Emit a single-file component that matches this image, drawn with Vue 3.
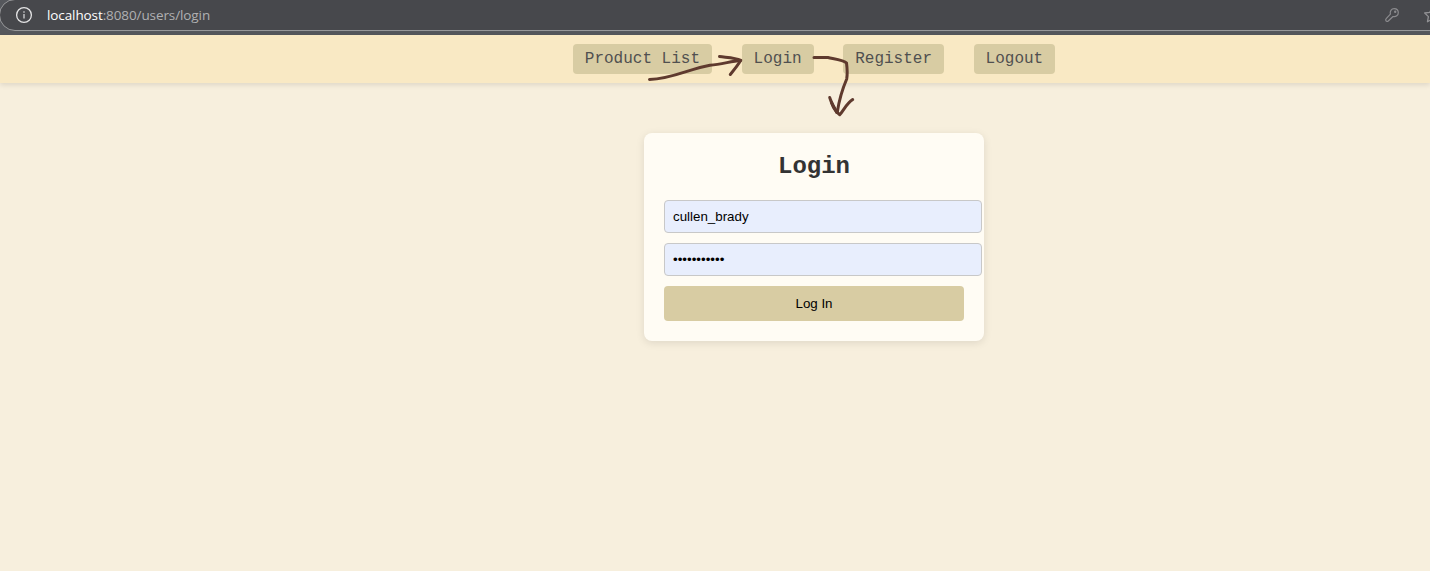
<script setup>
import { ref } from 'vue'

const links = ['Product List', 'Login', 'Register', 'Logout']
const username = ref('cullen_brady')
const password = ref('abcdefghijk')
</script>

<template>
  <div class="window">
    <div class="browser-bar">
      <div class="address">
        <svg class="info" width="18" height="18" viewBox="0 0 18 18" fill="none">
          <circle cx="9" cy="9" r="7.4" stroke="#e4e4e5" stroke-width="1.3" />
          <path d="M9 8v4.6" stroke="#b9b9bb" stroke-width="1.6" />
          <path d="M9 5.2v1.5" stroke="#b9b9bb" stroke-width="1.6" />
        </svg>
        <span class="url"><b>localhost</b><span class="path">:8080/users/login</span></span>
        <svg class="key" width="16" height="16" viewBox="0 0 16 16" fill="none" stroke="#8b8b8e" stroke-width="1.2" stroke-linejoin="round">
          <path d="M6.4 7.2C5.600 4.200 7.400 1.700 10.100 1.700C12.600 1.700 14.300 3.400 14.300 5.800C14.300 8.400 12 10.100 9 9.500L4.300 14C3.500 14.600 2.500 14.500 2 13.800C1.500 13.100 1.600 12.300 2.200 11.600Z" />
          <circle cx="11.200" cy="4.800" r=".6" />
        </svg>
        <svg class="star" width="18" height="18" viewBox="0 0 18 18" fill="none" stroke="#929295" stroke-width="1.300" stroke-linejoin="round">
          <path d="M9 1.700L11.200 6.300L16.300 7L12.600 10.600L13.500 15.700L9 13.300L4.500 15.700L5.400 10.600L1.700 7L6.800 6.300Z" />
        </svg>
      </div>
    </div>

    <nav class="nav">
      <a v-for="link in links" :key="link" class="nav-link">{{ link }}</a>
    </nav>

    <main class="content">
      <form class="card" @submit.prevent>
        <h2>Login</h2>
        <input v-model="username" type="text" aria-label="Username" />
        <input v-model="password" type="password" aria-label="Password" />
        <button type="submit">Log In</button>
      </form>
    </main>

    <svg class="arrows" width="230" height="80" viewBox="640 45 230 80" fill="none" stroke="#5f3a2e" stroke-width="3" stroke-linecap="round" stroke-linejoin="round">
      <path d="M649.500 79.500C672 79 690 68.500 710 65.200C722 64.500 731 61 740.500 60.500" />
      <path d="M719.500 56.500C727 57.500 735 57.500 740.800 60.300C738 65 734 70 730.300 74.500" />
      <path d="M814 57.500H828C835 59 844 60 846.500 63C847.300 69 847.500 74 846.700 79C842 90 839 101 837.300 112" />
      <path d="M829.700 97.500C832.500 105 834 111 839.700 114.700C844 110 846 104 852.700 99.500" />
      <path d="M831.500 102.500L836.800 112.500" />
    </svg>
  </div>
</template>

<style>
html,
body {
  margin: 0;
  overflow: hidden;
}
</style>

<style scoped>
.window {
  position: relative;
  height: 571px;
  overflow: hidden;
  background: #f7efdd;
  font-family: "Courier New", "Liberation Mono", monospace;
}

.browser-bar {
  height: 35px;
  background: #55575c;
  overflow: hidden;
}

.address {
  box-sizing: border-box;
  display: flex;
  align-items: center;
  width: 1470px;
  height: 32px;
  margin: -1px 0 0 -1px;
  padding-left: 15px;
  border: 1px solid #97989a;
  border-radius: 16px;
  background: #47484c;
}

.info {
  flex: none;
}

.url {
  margin-left: 14px;
  color: #fff;
  font: 13.500px/18px "Open Sans", "Noto Sans", sans-serif;
  letter-spacing: -0.100px;
}

.url b {
  font-weight: 400;
}

.path {
  color: #b0b0b2;
}

.key {
  margin-left: 1174px;
}

.star {
  margin-left: 23px;
}

.nav {
  position: relative;
  box-sizing: border-box;
  display: flex;
  justify-content: center;
  align-items: center;
  gap: 29.6px;
  height: 48px;
  padding-left: 198px;
  background: #f9e9c4;
  box-shadow: 0 2px 5px rgba(0, 0, 0, 0.1);
}

.nav-link {
  padding: 0 12px;
  border-radius: 4px;
  background: #d8cca3;
  color: #505050;
  font-size: 16px;
  line-height: 30px;
}

.content {
  display: flex;
  justify-content: center;
  padding: 50px 0 0 198px;
}

.card {
  display: flex;
  flex-direction: column;
  gap: 10px;
  box-sizing: border-box;
  width: 340px;
  height: 208px;
  padding: 20px;
  border-radius: 8px;
  background: #fffcf4;
  box-shadow: 0 2px 8px rgba(0, 0, 0, 0.1);
}

h2 {
  margin: 0 0 10px;
  color: #333;
  font-size: 24px;
  line-height: 27px;
  text-align: center;
}

input {
  box-sizing: border-box;
  width: 318px;
  height: 33px;
  padding: 0 8px;
  border: 1px solid #c8c8c8;
  border-radius: 4px;
  outline: 0;
  background: #e8eefd;
  color: #000;
  font: 13.333px "Liberation Sans", Arial, sans-serif;
}

button {
  height: 35px;
  padding: 0;
  border: 0;
  border-radius: 4px;
  background: #d8cca3;
  color: #000;
  font: 13.333px "Liberation Sans", Arial, sans-serif;
}

.arrows {
  position: absolute;
  left: 640px;
  top: 45px;
  pointer-events: none;
}
</style>
